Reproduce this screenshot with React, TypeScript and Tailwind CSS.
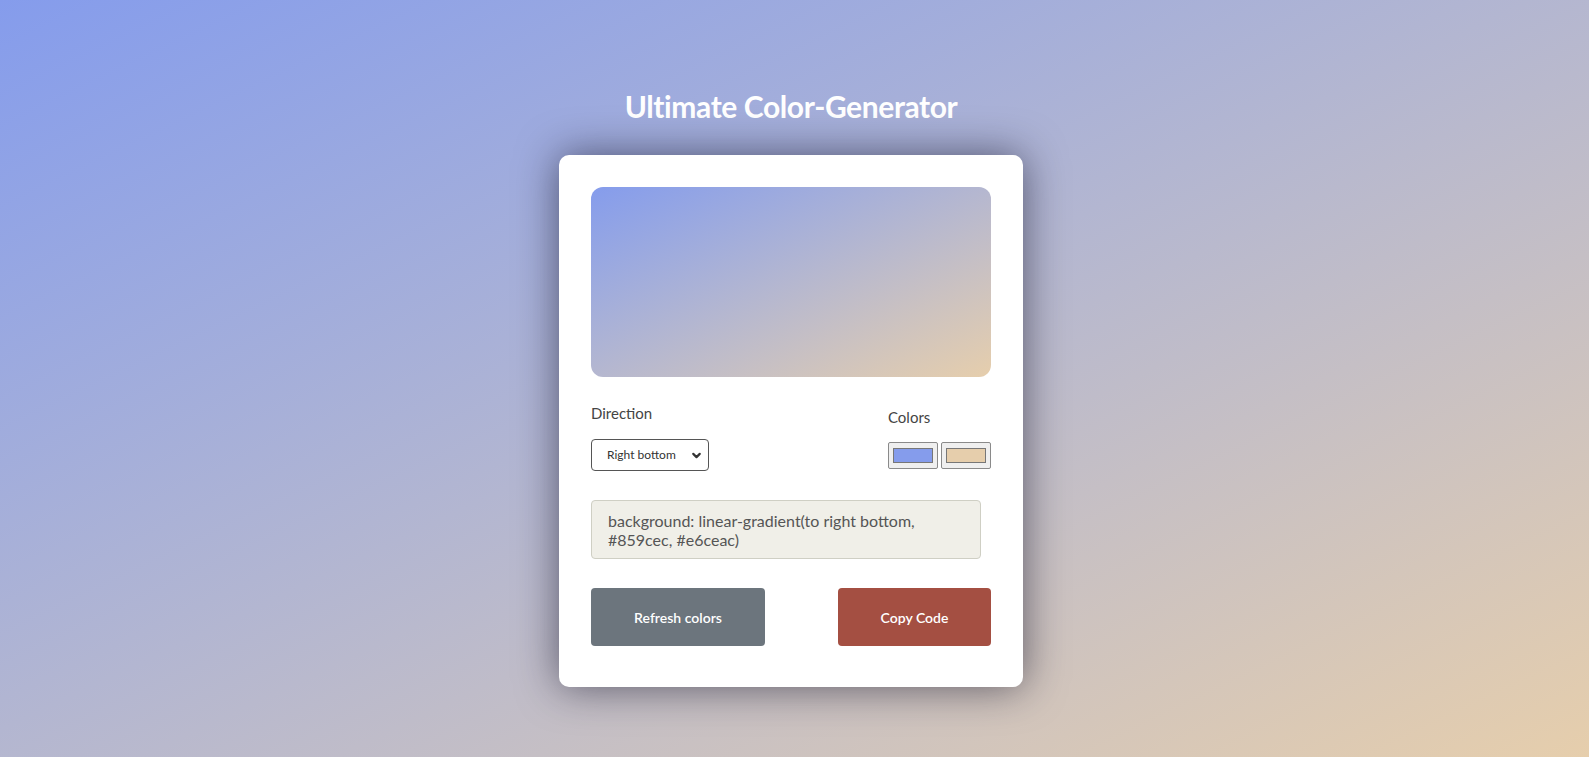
import { ChevronDown } from 'lucide-react';

const colors = ['#859cec', '#e6ceac'];

function Swatch({ color }: { color: string }) {
  return (
    <div className="flex h-[27px] w-[50px] items-center justify-center rounded-[2px] border border-[#8a8a8a] bg-[#efefef]">
      <div className="h-[15px] w-[40px] border border-[#777]" style={{ background: color }} />
    </div>
  );
}

export default function App() {
  return (
    <div
      className="flex min-h-screen flex-col items-center bg-gradient-to-br from-[#859cec] to-[#e6ceac] pr-[7px] pt-[88px] text-[#444]"
      style={{ fontFamily: 'Lato, "Open Sans", sans-serif' }}
    >
      <h1 className="mb-[31px] text-[30px] font-bold leading-[36px] tracking-[-0.4px] text-white">
        Ultimate Color-Generator
      </h1>

      <div className="w-[464px] rounded-[10px] bg-white px-8 pb-[41px] pt-8 shadow-[0_0_42px_rgba(20,20,40,0.6)]">
        <div className="h-[190px] rounded-[12px] bg-gradient-to-br from-[#859cec] to-[#e6ceac]" />

        <div className="flex items-start justify-between">
          <div className="mt-[25px] flex flex-col">
            <span className="text-[15px] leading-[22px]">Direction</span>
            <div className="relative mt-[15px] flex h-[32px] w-[118px] items-center rounded-[4px] border border-[#555] pl-[15px] text-[12px] text-[#333]">
              Right bottom
              <ChevronDown className="absolute right-[5px] top-[9px] h-[13px] w-[13px]" strokeWidth={4} />
            </div>
          </div>

          <div className="mt-[29px] flex w-[103px] flex-col">
            <span className="text-[15px] leading-[22px]">Colors</span>
            <div className="mt-[14px] flex gap-[3px]">
              {colors.map((c) => (
                <Swatch key={c} color={c} />
              ))}
            </div>
          </div>
        </div>

        <div className="mt-[29px] h-[59px] w-[390px] rounded-[4px] border border-[#cfcfc4] bg-[#f0efe8] px-4 pt-[10px] text-[16px] leading-[19px] text-[#555]">
          background: linear-gradient(to right bottom, #859cec, #e6ceac)
        </div>

        <div className="mt-[29px] flex justify-between">
          <button className="h-[58px] w-[174px] rounded-[4px] bg-[#6c757d] text-[14px] font-semibold text-white">
            Refresh colors
          </button>
          <button className="h-[58px] w-[153px] rounded-[4px] bg-[#a44f42] text-[14px] font-semibold text-white">
            Copy Code
          </button>
        </div>
      </div>
    </div>
  );
}
